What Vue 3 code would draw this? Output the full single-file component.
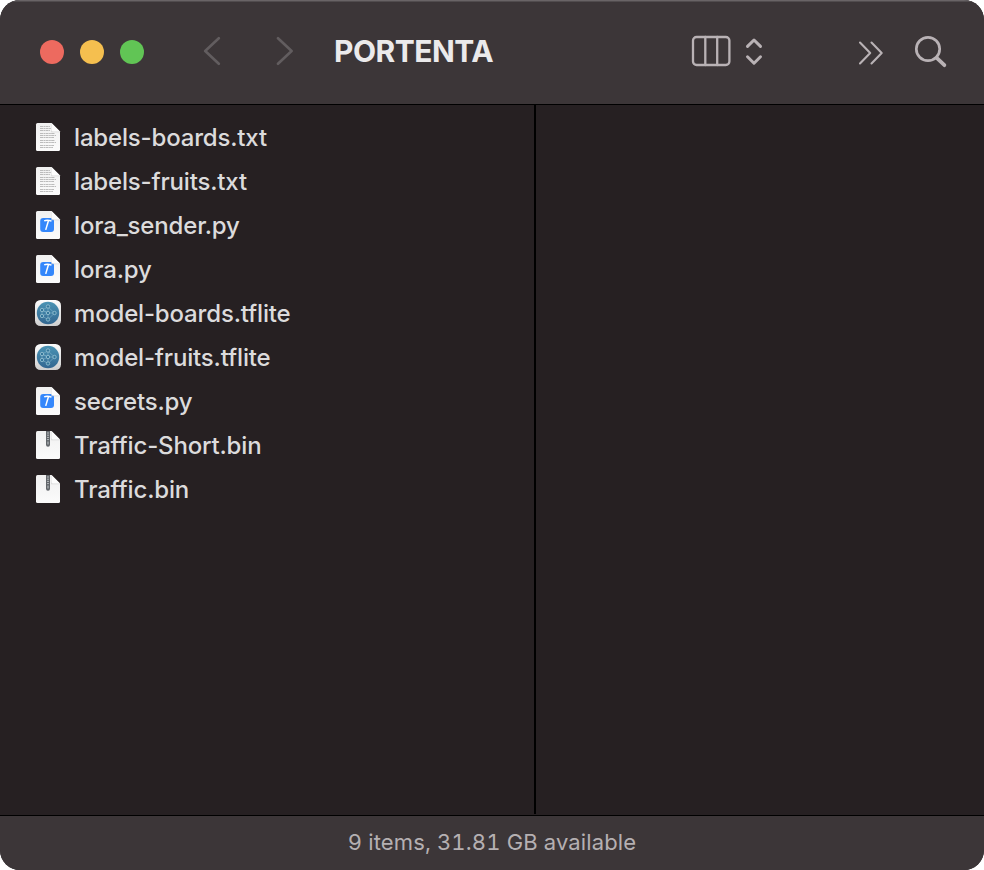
<script setup>
const files = [
  { name: 'labels-boards.txt', kind: 'txt' },
  { name: 'labels-fruits.txt', kind: 'txt' },
  { name: 'lora_sender.py', kind: 'py' },
  { name: 'lora.py', kind: 'py' },
  { name: 'model-boards.tflite', kind: 'model' },
  { name: 'model-fruits.tflite', kind: 'model' },
  { name: 'secrets.py', kind: 'py' },
  { name: 'Traffic-Short.bin', kind: 'bin' },
  { name: 'Traffic.bin', kind: 'bin' },
]
</script>

<template>
  <div class="window">
    <svg class="defs" width="0" height="0" aria-hidden="true">
      <defs>
        <linearGradient id="paper" x1="0" y1="0" x2="0" y2="1">
          <stop offset="0" stop-color="#f0f0f0" />
          <stop offset="1" stop-color="#fbfbfb" />
        </linearGradient>
        <linearGradient id="tile" x1="0" y1="0" x2="0" y2="1">
          <stop offset="0" stop-color="#fcfcfc" />
          <stop offset="1" stop-color="#cfcfcf" />
        </linearGradient>
        <linearGradient id="disc" x1="0" y1="0" x2="0" y2="1">
          <stop offset="0" stop-color="#4a93b4" />
          <stop offset="1" stop-color="#336791" />
        </linearGradient>
      </defs>
    </svg>
    <header class="toolbar">
      <div class="lights">
        <span class="light red"></span>
        <span class="light yellow"></span>
        <span class="light green"></span>
      </div>
      <svg class="nav" width="90" height="30" viewBox="0 0 90 30">
        <path d="M15.8 2.2 2.2 15 15.8 27.8M75 2.2 88.6 15 75 27.8" />
      </svg>
      <h1 class="title">PORTENTA</h1>
      <svg class="view" width="74" height="34" viewBox="0 0 74 34">
        <rect x="3" y="3" width="36.4" height="28" rx="3.6" />
        <path d="M15.3 3v28M27.2 3v28" />
        <path class="thick" d="M57.5 12.4 64 6l6.5 6.4M57.5 22.8 64 29.2l6.5-6.4" />
      </svg>
      <svg class="more" width="26" height="24" viewBox="0 0 26 24">
        <path d="M2 1.5 12.2 12 2 22.5M13.5 1.5 23.7 12 13.5 22.5" />
      </svg>
      <svg class="search" width="34" height="34" viewBox="0 0 34 34">
        <circle cx="14" cy="14" r="11.7" />
        <path d="m22.7 22.8 7.7 7.4" />
      </svg>
    </header>
    <main class="columns">
      <ul class="files">
        <li v-for="file in files" :key="file.name" class="file">
          <svg class="icon" width="28" height="32" viewBox="0 0 28 32">
            <template v-if="file.kind === 'model'">
              <rect x="1" y="3" width="26" height="26" rx="5.5" fill="url(#tile)" />
              <circle cx="14" cy="16" r="11.2" fill="url(#disc)" />
              <g class="links">
                <path d="m14 10-6 3 6 3 6.5 0zM8 13v6l6-3zM8 19l6 3.5 6.5-6.5M14 10v12" />
              </g>
              <g class="nodes">
                <circle cx="14" cy="9.5" r="1.7" /><circle cx="14" cy="16" r="1.7" />
                <circle cx="14" cy="22.5" r="1.7" /><circle cx="8" cy="13" r="1.7" />
                <circle cx="8" cy="19" r="1.7" /><circle cx="20.5" cy="16" r="1.7" />
              </g>
            </template>
            <template v-else>
              <path d="M3.5 2H17.5L26 10.5V28.5Q26 30 24.5 30H3.5Q2 30 2 28.5V3.5Q2 2 3.5 2Z" fill="url(#paper)" />
              <g v-if="file.kind === 'txt'" class="lines">
                <path d="M6 5.5h10M6 7.5h11M6 9.5h10M6 12.5h15M6 14.5h16M6 16.5h14M6 19.5h15M6 21.5h16M6 24.5h14M6 26.5h13" />
              </g>
              <g v-else-if="file.kind === 'py'">
                <rect x="6.2" y="9" width="13.8" height="14" rx="3" fill="#3487fb" />
                <path d="M10.2 11.9q3-1.5 7.3.2" class="hammer" />
                <path d="M14.5 11.5 11.7 20.9" class="hammer" />
              </g>
              <g v-else>
                <path d="M12 2h4v13.7q0 2-2 2t-2-2z" fill="#62666a" />
                <path d="M13 4h2M13 6.2h2M13 8.4h2M13 10.6h2" stroke="#b7babd" />
                <path d="M13.3 12.5h1.4v3h-1.4z" fill="#aaaeb1" />
              </g>
              <path d="M17.2 2.5v8.8H26z" fill="#c9c9c9" opacity=".65" />
              <path d="M17.5 2 26 10.5H19Q17.5 10.5 17.5 9Z" fill="#fdfdfd" />
            </template>
          </svg>
          <span class="name">{{ file.name }}</span>
        </li>
      </ul>
      <div class="divider"></div>
      <div class="empty"></div>
    </main>
    <footer class="status">9 items, 31.81 GB available</footer>
  </div>
</template>

<style>
body {
  background: #fff;
}
</style>

<style scoped>
.window {
  box-sizing: border-box;
  display: flex;
  flex-direction: column;
  width: 984px;
  height: 870px;
  overflow: hidden;
  border-radius: 20px;
  background: #262022;
  color: #dcdbdc;
  font-family: Inter, "Liberation Sans", sans-serif;
}
.defs {
  position: absolute;
}
.toolbar {
  box-sizing: border-box;
  display: flex;
  align-items: center;
  flex: none;
  height: 105px;
  padding: 0 36px 0 40px;
  border-bottom: 1px solid #000;
  background: #3c3638;
  box-shadow: inset 0 1px #696466, inset 0 2px #514c4e;
}
.lights {
  display: flex;
  gap: 16px;
}
.light {
  width: 24px;
  height: 24px;
  border-radius: 50%;
}
.red {
  background: #ed6a5f;
}
.yellow {
  background: #f5bf4f;
}
.green {
  background: #61c555;
}
.toolbar svg {
  flex: none;
  fill: none;
  stroke: #b9b2b5;
  stroke-width: 2.3;
  stroke-linecap: round;
  stroke-linejoin: round;
}
.toolbar .nav {
  margin: 0 0 2px 59px;
  stroke: #625d5f;
  stroke-width: 2.6;
}
.title {
  flex: 1;
  margin: 0 0 2px 41px;
  color: #ebeaeb;
  font-size: 30px;
  line-height: 40px;
  font-weight: 700;
  letter-spacing: -0.5px;
}
.view {
  margin: 0 94px 2px 0;
}
.toolbar .thick {
  stroke-width: 3;
}
.toolbar .more {
  margin: 2px 30px 0 0;
  stroke-width: 2.1;
}
.toolbar .search {
  stroke-width: 2.7;
}
.search path {
  stroke-width: 3.7;
}
.columns {
  display: flex;
  height: 709px;
  margin-bottom: 1px;
}
.files {
  box-sizing: border-box;
  width: 534px;
  margin: 0;
  padding: 10px 34px;
  list-style: none;
}
.file {
  display: flex;
  align-items: center;
  height: 44px;
  gap: 12px;
}
.icon {
  flex: none;
}
.lines {
  stroke: #b4b4b4;
  stroke-width: 0.9;
  stroke-dasharray: 3 0.5 1.7 0.4;
}
.hammer {
  fill: none;
  stroke: #fff;
  stroke-width: 1.5;
}
.links {
  fill: none;
  stroke: #80b5cb;
  stroke-width: 0.6;
}
.nodes {
  fill: #34779b;
  stroke: #a9cedc;
  stroke-width: 0.7;
}
.name {
  padding-top: 2px;
  font-size: 24px;
  font-weight: 500;
  letter-spacing: -0.17px;
  line-height: 32px;
  white-space: nowrap;
}
.divider {
  width: 2px;
  background: #000;
}
.empty {
  flex: 1;
}
.status {
  flex: 1;
  border-top: 1px solid #000;
  background: #3c3638;
  color: #b5b0b2;
  font-size: 22px;
  font-variant-numeric: tabular-nums;
  letter-spacing: 0.13px;
  line-height: 52px;
  text-align: center;
}
</style>
